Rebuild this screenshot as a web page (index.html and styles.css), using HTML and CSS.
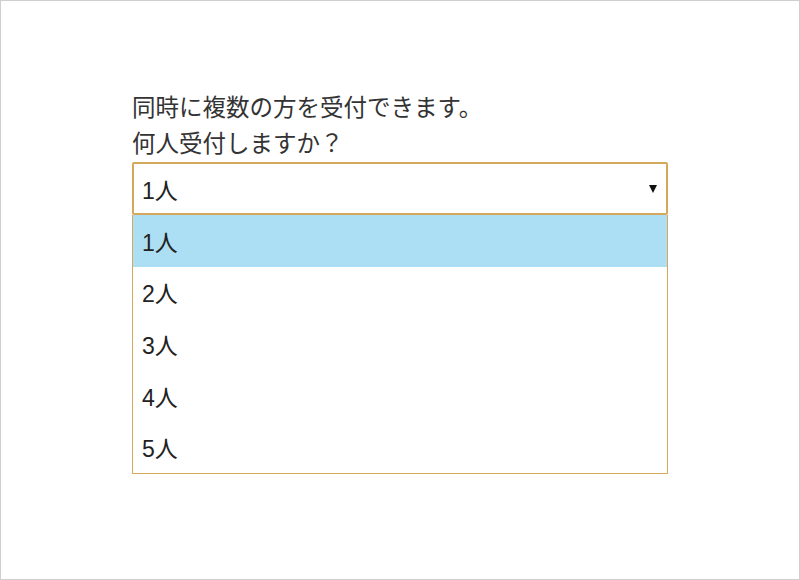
FILE: index.html
```html
<!DOCTYPE html>
<html lang="ja">
<head>
<meta charset="utf-8">
<link rel="stylesheet" href="styles.css">
</head>
<body>
<div class="frame">
  <div class="content">
    <p class="lead">同時に複数の方を受付できます。<br>何人受付しますか？</p>
    <div class="select">
      <span class="value">1人</span>
      <span class="arrow"></span>
    </div>
    <ul class="options">
      <li class="option selected">1人</li>
      <li class="option">2人</li>
      <li class="option">3人</li>
      <li class="option">4人</li>
      <li class="option">5人</li>
    </ul>
  </div>
</div>
</body>
</html>
```
FILE: styles.css
```css
html, body {
  margin: 0;
  padding: 0;
  background: #fff;
}
.frame {
  box-sizing: border-box;
  width: 800px;
  height: 580px;
  border: 1px solid #cfcfcf;
  padding: 89px 0 0 131px;
  font-family: "Liberation Sans", "Noto Sans CJK JP", sans-serif;
  color: #222;
}
.content {
  width: 536px;
}
.lead {
  margin: 0;
  font-size: 23.5px;
  line-height: 36px;
  color: #333;
}
.select {
  box-sizing: border-box;
  height: 53px;
  border: 2px solid #d4a95c;
  border-radius: 2px;
  display: flex;
  align-items: center;
  justify-content: space-between;
  padding: 0 9px 0 8px;
  font-size: 23px;
}
.arrow {
  width: 0;
  height: 0;
  border-left: 4px solid transparent;
  border-right: 4px solid transparent;
  border-top: 8px solid #111;
  margin-top: 1px;
}
.options {
  list-style: none;
  margin: 0;
  padding: 0;
  border: 1px solid #d4a95c;
  border-top: none;
}
.option {
  height: 51.6px;
  display: flex;
  align-items: center;
  padding-left: 9px;
  font-size: 23px;
}
.option.selected {
  background: #addff4;
}
```
